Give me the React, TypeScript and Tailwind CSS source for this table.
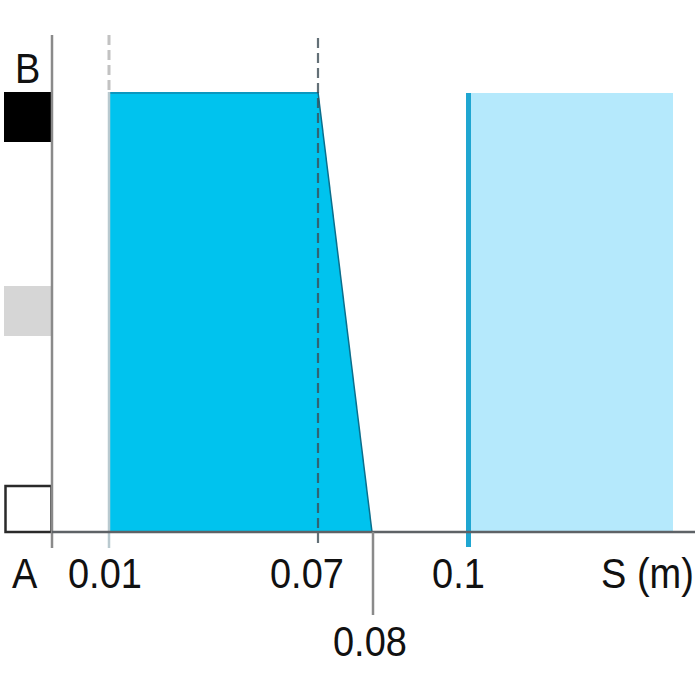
const label = "font-['Liberation_Sans',Arial,sans-serif]";

function Tick({ x, y, text }: { x: number; y: number; text: string }) {
  return (
    <text x={x} y={y} fontSize={38} fill="#111" transform={`translate(0 ${y}) scale(1 1.1) translate(0 ${-y})`}>
      {text}
    </text>
  );
}

export default function App() {
  return (
    <div className="w-[700px] h-[700px] bg-white">
      <svg width={700} height={700} viewBox="0 0 700 700" className={label}>
        {/* legend boxes on the B–A axis */}
        <rect x={4} y={92} width={49} height={50} fill="#000" />
        <rect x={4} y={286} width={48} height={50} fill="#d6d6d6" />
        <rect x={5.5} y={486} width={46} height={46} fill="none" stroke="#2a2a2a" strokeWidth={2.5} />

        {/* light zone beyond 0.1 */}
        <rect x={468} y={93} width={205} height={439} fill="#b5e9fc" />
        <line x1={468.5} y1={93} x2={468.5} y2={547} stroke="#1fa6d1" strokeWidth={5} />

        {/* main zone */}
        <polygon points="109,92 318,92 372,532 109,532" fill="#00c3ee" />
        <line x1={109} y1={93} x2={318} y2={93} stroke="#0b97bf" strokeWidth={2} />
        <line x1={318} y1={92} x2={372} y2={532} stroke="#0b6e8c" strokeWidth={1.5} />

        {/* guide at 0.01 */}
        <line x1={109} y1={35} x2={109} y2={92} stroke="#c2c2c2" strokeWidth={3} strokeDasharray="10 5" />
        <line x1={109} y1={92} x2={109} y2={548} stroke="#b9c9cf" strokeWidth={2.5} />

        {/* guide at 0.07 */}
        <line x1={318} y1={38} x2={318} y2={548} stroke="#3c4c55" strokeOpacity={0.8} strokeWidth={2.2} strokeDasharray="10 5" />

        {/* axes */}
        <line x1={52} y1={35} x2={52} y2={548} stroke="#8a8a8a" strokeWidth={2.5} />
        <line x1={52} y1={532} x2={695} y2={532} stroke="#5e6266" strokeWidth={2.5} />
        <line x1={373} y1={532} x2={373} y2={615} stroke="#8a8a8a" strokeWidth={2.5} />

        {/* labels */}
        <Tick x={15} y={83} text="B" />
        <Tick x={12} y={588} text="A" />
        <Tick x={68} y={588} text="0.01" />
        <Tick x={270} y={588} text="0.07" />
        <Tick x={432} y={588} text="0.1" />
        <Tick x={601} y={588} text="S (m)" />
        <Tick x={333} y={656} text="0.08" />
      </svg>
    </div>
  );
}
